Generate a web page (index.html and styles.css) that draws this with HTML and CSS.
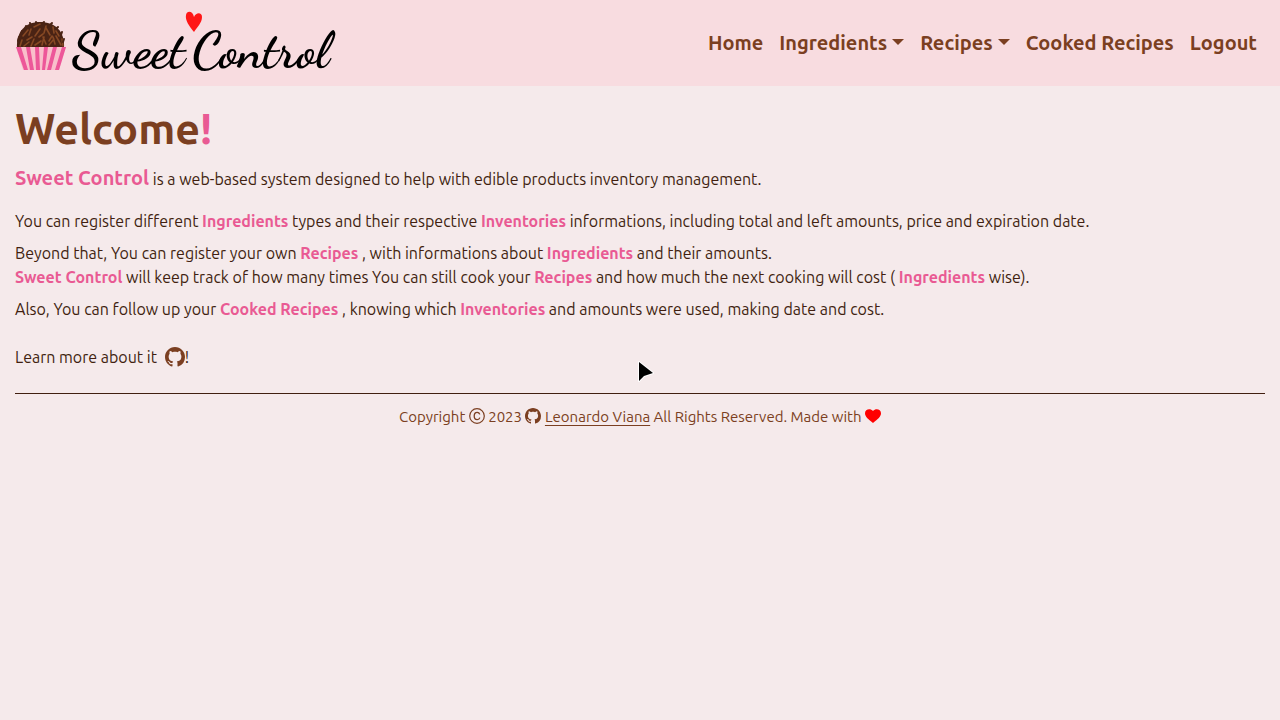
FILE: index.html
```html
<!DOCTYPE html>
<html lang="en">
<head>
<meta charset="utf-8">
<meta name="viewport" content="width=device-width, initial-scale=1">
<title>Sweet Control</title>
<link rel="stylesheet" href="styles.css">
</head>
<body>
<svg class="sprite" aria-hidden="true">
  <symbol id="github" viewBox="0 0 16 16"><path d="M8 0C3.58 0 0 3.58 0 8c0 3.54 2.29 6.53 5.47 7.59.4.07.55-.17.55-.38 0-.19-.01-.82-.01-1.49-2.01.37-2.53-.49-2.69-.94-.09-.23-.48-.94-.82-1.13-.28-.15-.68-.52-.01-.53.63-.01 1.08.58 1.23.82.72 1.21 1.87.87 2.33.66.07-.52.28-.87.51-1.07-1.78-.2-3.64-.89-3.64-3.95 0-.87.31-1.59.82-2.15-.08-.2-.36-1.02.08-2.12 0 0 .67-.21 2.2.82.64-.18 1.32-.27 2-.27s1.36.09 2 .27c1.53-1.04 2.2-.82 2.2-.82.44 1.1.16 1.92.08 2.12.51.56.82 1.27.82 2.15 0 3.07-1.87 3.75-3.65 3.95.29.25.54.73.54 1.48 0 1.07-.01 1.93-.01 2.2 0 .21.15.46.55.38A8.01 8.01 0 0 0 16 8c0-4.42-3.58-8-8-8"/></symbol>
</svg>
<header class="navbar">
  <a class="brand" href="#" aria-label="Sweet Control">
    <svg class="logo" viewBox="0 0 322 64" width="322" height="64">
      <path d="M2 37C1 21 10 11 25 11s25 9 24 26z" fill="#4a2314"/>
      <g stroke="#864824" stroke-width="1.600" stroke-linecap="round">
        <path d="M5 35l2-6M9 35l5-4M8 25l5-6M16 35l3-7M14 24l2-6M20 34l6-4M20 25l5-7M19 16l6-3M27 34l2-8M31 33l-3-7M29 22l2-7M34 34l5-6M35 24l-4-7M39 22l-1-6M40 33l-2-7M46 34l-5-9M48 35l-1-7M44 25l-3-5M12 29l5-3M24 26l4-3M34 30l3-5"/>
      </g>
      <g stroke="#4a2314" stroke-width="2" stroke-linecap="round">
        <path d="M3 30l1-4M6 23l1-3M10 18l1-3M16 14l-1-2M21 12v-1M28 12l1-1M35 14l2-2M41 18l2-2M46 24l1-3M48 31l1-3"/>
      </g>
      <path d="M1 36h50l-7 23H8z" fill="#f9bfcb"/>
      <path d="M1 36h5l7 23H9zM11 36h4l4 23h-4zM20 36h4l1 23h-4zM29 36h4l-3 23h-3zM38 36h4l-6 23h-4zM47 36h4l-7 23h-4z" fill="#ed5799"/>
      <text class="logo-text" x="57" y="56">Sweet</text>
      <text class="logo-text" x="177" y="56">Control</text>
      <path d="M179 21C174 15 170 9 171 4c1-5 7-4 8 2 2-5 8-5 8 0 0 6-5 10-8 15z" fill="#ff1616"/>
    </svg>
  </a>
  <nav class="menu" aria-label="Main">
    <a href="#">Home</a>
    <button type="button" class="dropdown">Ingredients</button>
    <button type="button" class="dropdown">Recipes</button>
    <a href="#">Cooked Recipes</a>
    <a href="#">Logout</a>
  </nav>
</header>
<main class="content">
  <h1>Welcome<span class="accent">!</span></h1>
  <p class="lead"><strong class="name">Sweet Control</strong> is a web-based system designed to help with edible products inventory management.</p>
  <p>You can register different <strong>Ingredients</strong> types and their respective <strong>Inventories</strong> informations, including total and left amounts, price and expiration date.</p>
  <p>Beyond that, You can register your own <strong>Recipes</strong> , with informations about <strong>Ingredients</strong> and their amounts.<br>
  <strong>Sweet Control</strong> will keep track of how many times You can still cook your <strong>Recipes</strong> and how much the next cooking will cost ( <strong>Ingredients</strong> wise).</p>
  <p>Also, You can follow up your <strong>Cooked Recipes</strong> , knowing which <strong>Inventories</strong> and amounts were used, making date and cost.</p>
  <p class="more">Learn more about it <a class="repo" href="#" aria-label="GitHub repository"><svg class="icon-lg"><use href="#github"/></svg></a>!</p>
</main>
<footer class="footer">
  Copyright <svg class="icon" viewBox="0 0 16 16" aria-hidden="true"><circle cx="8" cy="8" r="7.3" fill="none" stroke="currentColor" stroke-width="1.2"/><path d="M10.8 6.4C10.3 5 9.400 4.400 8.200 4.400 6.300 4.400 5.200 5.800 5.200 8s1.100 3.600 3 3.600c1.300 0 2.300-.8 2.600-2" fill="none" stroke="currentColor" stroke-width="1.300"/></svg> 2023 <svg class="icon" aria-hidden="true"><use href="#github"/></svg> <a href="#">Leonardo Viana</a> All Rights Reserved. Made with <svg class="icon heart" viewBox="0 0 16 16" role="img" aria-label="love"><path d="M8 15C3 11 0 8.500 0 5.200 0 1 5.500 0 8 3c2.500-3 8-2 8 2.200C16 8.500 13 11 8 15z"/></svg>
</footer>
<svg class="cursor" viewBox="0 0 18 24" aria-hidden="true"><path d="M2 2v19l5-5 9-3z" fill="#000" stroke="#fff" stroke-width="2" stroke-linejoin="round" paint-order="stroke"/></svg>
</body>
</html>
```
FILE: styles.css
```css
* { box-sizing: border-box; }
body {
  margin: 0;
  background: #f5eaeb;
  color: #411f10;
  font-family: Ubuntu, "Noto Sans", sans-serif;
  font-size: 16px;
  line-height: 24px;
}
.sprite { display: none; }
.navbar {
  display: flex;
  align-items: center;
  justify-content: space-between;
  min-height: 86px;
  padding: 11px 15px;
  background: #f8dce0;
}
.brand, .logo { display: block; }
.logo { overflow: visible; }
.logo-text {
  font-family: "Dancing Script", "Kaushan Script", "Liberation Serif", serif;
  font-weight: 700;
  font-size: 52px;
}
.menu { display: flex; }
.menu a, .menu button {
  padding: 8px;
  border: 0;
  background: none;
  color: #7b3f21;
  font: 700 20px/30px Ubuntu, "Noto Sans", sans-serif;
  text-decoration: none;
  white-space: nowrap;
}
.dropdown::after {
  content: "";
  display: inline-block;
  margin-left: 5px;
  vertical-align: 5px;
  border: 6px solid transparent;
  border-top-color: currentColor;
  border-bottom: 0;
}
.content { padding: 16px 15px 0; }
h1 {
  margin: 0 0 8px;
  color: #7b3f21;
  font-size: 43px;
  line-height: 53px;
  font-weight: 700;
}
p { margin: 0 0 8px; }
strong, .accent { color: #e95a93; }
strong { font-weight: 700; }
.lead { margin-bottom: 16px; }
.name { font-size: 20px; line-height: 30px; }
.more { margin: 24px 0; }
.repo { margin-left: 4px; color: #7b3f21; }
.icon-lg { width: 20px; height: 20px; vertical-align: -4px; fill: currentColor; }
.footer {
  margin: 0 15px;
  padding-top: 11px;
  border-top: 1px solid #411f10;
  color: #7b3f21;
  text-align: center;
  font-size: 15px;
}
.footer a { color: inherit; text-underline-offset: 3px; }
.icon { width: 16px; height: 16px; vertical-align: -2px; fill: currentColor; }
.heart { color: #f00; }
.cursor { position: absolute; left: 637px; top: 360px; width: 18px; height: 24px; }
```
